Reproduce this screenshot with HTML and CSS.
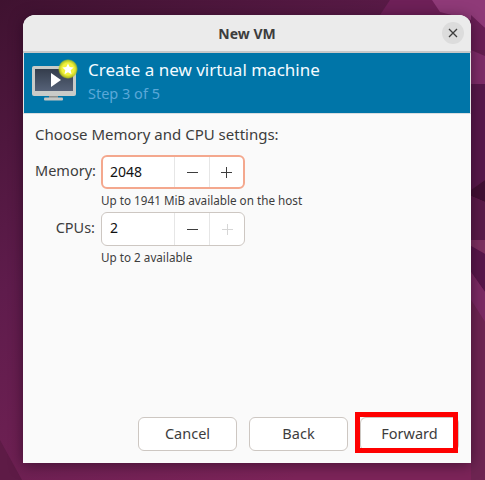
FILE: index.html

```html
<!DOCTYPE html>
<html lang="en">
<head>
  <meta charset="UTF-8" />
  <title>New VM</title>
  <link rel="stylesheet" href="styles.css">
</head>
<body>

  <!-- Wallpaper -->
  <svg class="wallpaper" viewBox="0 0 485 480" aria-hidden="true">
    <defs>
      <linearGradient id="wallBase" x1="0" y1="0" x2="0.6" y2="1">
        <stop offset="0" stop-color="#3f1230"/>
        <stop offset="0.45" stop-color="#5f1c4c"/>
        <stop offset="1" stop-color="#7c2459"/>
      </linearGradient>
    </defs>
    <rect width="485" height="480" fill="url(#wallBase)"/>
    <polygon points="390,0 433,0 450,15 380,15" fill="#6e2058"/>
    <polygon points="432,0 485,0 485,28 471,20 440,12" fill="#8f3a78"/>
    <polygon points="471,15 485,28 485,50 471,50" fill="#6a1f56"/>
    <polygon points="471,50 485,56 485,84 471,84" fill="#7e2c68"/>
    <polygon points="471,84 485,84 485,180 471,190" fill="#57184a"/>
    <polygon points="471,190 485,180 485,202 471,196" fill="#400f32"/>
    <polygon points="471,196 485,202 485,240 471,240" fill="#5a1a48"/>
    <polygon points="471,240 485,240 485,254 471,246" fill="#7d3060"/>
    <polygon points="471,246 485,254 485,292 471,272" fill="#58164a"/>
    <polygon points="471,272 485,292 485,322 471,300" fill="#7c2a64"/>
    <polygon points="471,300 485,322 485,480 471,480" fill="#6e2552"/>
    <polygon points="0,440 22,480 0,480" fill="#5e1b46"/>
  </svg>

  <div class="window">
    <header class="titlebar">
      <span class="title">New VM</span>
      <span class="close">
        <svg width="10" height="10" viewBox="0 0 10 10"><path d="M1 1l8 8M9 1l-8 8" stroke="#3d3d3d" stroke-width="1.3" fill="none"/></svg>
      </span>
    </header>

    <div class="banner">
      <svg class="vm-icon" width="48" height="48" viewBox="0 0 48 48">
        <defs>
          <radialGradient id="glow">
            <stop offset="0.6" stop-color="#f2f23c"/>
            <stop offset="0.85" stop-color="#c4cf1c" stop-opacity="0.9"/>
            <stop offset="1" stop-color="#a8c020" stop-opacity="0.1"/>
          </radialGradient>
          <linearGradient id="screen" x1="0" y1="0" x2="0" y2="1">
            <stop offset="0" stop-color="#343d4c"/>
            <stop offset="1" stop-color="#566278"/>
          </linearGradient>
        </defs>
        <rect x="3" y="7" width="44" height="30" rx="2" fill="#c9cbc8"/>
        <rect x="6" y="10" width="38" height="22" fill="url(#screen)"/>
        <path d="M22 14l10 7-10 7z" fill="#fff"/>
        <rect x="20" y="37" width="9" height="2" fill="#8f918e"/>
        <rect x="15" y="38.500" width="19" height="3" rx="1" fill="#c5c7c4"/>
        <circle cx="39" cy="10" r="10" fill="url(#glow)"/>
        <path d="M39 4.500l1.700 3.600 3.900.5-2.900 2.700.8 3.900-3.500-2-3.500 2 .8-3.900-2.900-2.700 3.900-.5z" fill="#fff"/>
      </svg>
      <div class="banner-text">
        <div class="banner-title">Create a new virtual machine</div>
        <div class="banner-step">Step 3 of 5</div>
      </div>
    </div>

    <main class="content">
      <p class="intro">Choose Memory and CPU settings:</p>
      <div class="settings">
        <label class="field-label">Memory:</label>
        <div class="spin focused">
          <span class="spin-value">2048</span>
          <span class="spin-btn"><svg width="11" height="11" viewBox="0 0 11 11"><path d="M0 5.500h11" stroke="#3d3d3d" fill="none"/></svg></span>
          <span class="spin-btn"><svg width="11" height="11" viewBox="0 0 11 11"><path d="M0 5.500h11M5.500 0v11" stroke="#3d3d3d" fill="none"/></svg></span>
        </div>
        <div class="hint">Up to 1941 MiB available on the host</div>

        <label class="field-label">CPUs:</label>
        <div class="spin">
          <span class="spin-value">2</span>
          <span class="spin-btn"><svg width="11" height="11" viewBox="0 0 11 11"><path d="M0 5.500h11" stroke="#3d3d3d" fill="none"/></svg></span>
          <span class="spin-btn"><svg width="11" height="11" viewBox="0 0 11 11"><path d="M0 5.500h11M5.500 0v11" stroke="#d6d6d6" fill="none"/></svg></span>
        </div>
        <div class="hint">Up to 2 available</div>
      </div>
    </main>

    <footer class="actions">
      <button class="btn">Cancel</button>
      <button class="btn">Back</button>
      <button class="btn">Forward</button>
      <span class="highlight"></span>
    </footer>
  </div>

</body>
</html>
```

FILE: styles.css

```css
html, body {
  margin: 0;
  padding: 0;
  height: 480px;
  overflow: hidden;
}
body {
  font-family: 'Noto Sans', 'Open Sans', sans-serif;
  color: #3d3d3d;
  background: #5f1c4c;
  position: relative;
}
.wallpaper {
  position: absolute;
  left: 0;
  top: 0;
  width: 485px;
  height: 480px;
}
.window {
  position: absolute;
  left: 23px;
  top: 15px;
  width: 448px;
  height: 448px;
  display: flex;
  flex-direction: column;
  background: #fafafa;
  border-radius: 12px 12px 0 0;
  box-shadow: 0 2px 14px rgba(30, 5, 25, 0.55);
}
.titlebar {
  height: 36px;
  flex: none;
  display: flex;
  align-items: center;
  justify-content: center;
  position: relative;
  background: #ebebeb;
  border-bottom: 2px solid #c8c8c8;
  border-radius: 12px 12px 0 0;
}
.title {
  font-size: 14px;
  font-weight: 700;
}
.close {
  position: absolute;
  right: 7px;
  top: 7px;
  width: 22px;
  height: 22px;
  border-radius: 50%;
  background: #dcdcdc;
  display: flex;
  align-items: center;
  justify-content: center;
}
.banner {
  height: 61px;
  flex: none;
  display: flex;
  align-items: center;
  gap: 11px;
  padding-left: 5px;
  background: #0075a8;
  border-left: 1px solid #e4e4e4;
  border-right: 1px solid #e4e4e4;
  border-bottom: 1px solid #d8dde0;
  box-sizing: border-box;
}
.vm-icon {
  flex: none;
  overflow: visible;
}
.banner-text {
  margin-top: -5px;
}
.banner-title {
  font-size: 17px;
  line-height: 24px;
  color: #f4fbff;
}
.banner-step {
  font-size: 14.500px;
  line-height: 22px;
  color: #5aa8d8;
}
.content {
  flex: 1;
  padding: 10px 12px 0;
}
.intro {
  margin: 0 0 11px;
  font-size: 15px;
  line-height: 20px;
}
.settings {
  display: grid;
  grid-template-columns: 60px 144px;
  column-gap: 6px;
  row-gap: 0;
  align-items: start;
}
.field-label {
  text-align: right;
  font-size: 14.500px;
  line-height: 20px;
  padding-top: 5px;
}
.spin {
  height: 34px;
  box-sizing: border-box;
  display: flex;
  align-items: stretch;
  background: #fff;
  border: 1px solid #cdc7c2;
  border-radius: 6px;
}
.spin.focused {
  border: 2px solid #f4a88e;
}
.spin-value {
  flex: 1;
  padding-left: 8px;
  font-size: 14px;
  line-height: 29px;
  color: #111;
}
.spin.focused .spin-value {
  padding-left: 7px;
}
.spin-btn {
  flex: none;
  width: 35px;
  box-sizing: border-box;
  border-left: 1px solid #e6e6e6;
  display: flex;
  align-items: center;
  justify-content: center;
}
.spin.focused .spin-btn:last-child {
  width: 34px;
}
.hint {
  grid-column: 2;
  font-size: 11.700px;
  line-height: 18px;
  margin: 2px 0 3px;
  white-space: nowrap;
}
.actions {
  flex: none;
  display: flex;
  justify-content: flex-end;
  gap: 12px;
  padding: 0 12px 12px 0;
  position: relative;
}
.btn {
  width: 99px;
  height: 34px;
  padding: 0 0 2px;
  background: #fff;
  border: 1px solid #cdc7c2;
  border-radius: 6px;
  font-family: inherit;
  font-size: 14.500px;
  color: #3d3d3d;
}
.highlight {
  position: absolute;
  left: 332px;
  top: -5px;
  width: 93px;
  height: 31px;
  border: 5px solid #fe0000;
}
```
